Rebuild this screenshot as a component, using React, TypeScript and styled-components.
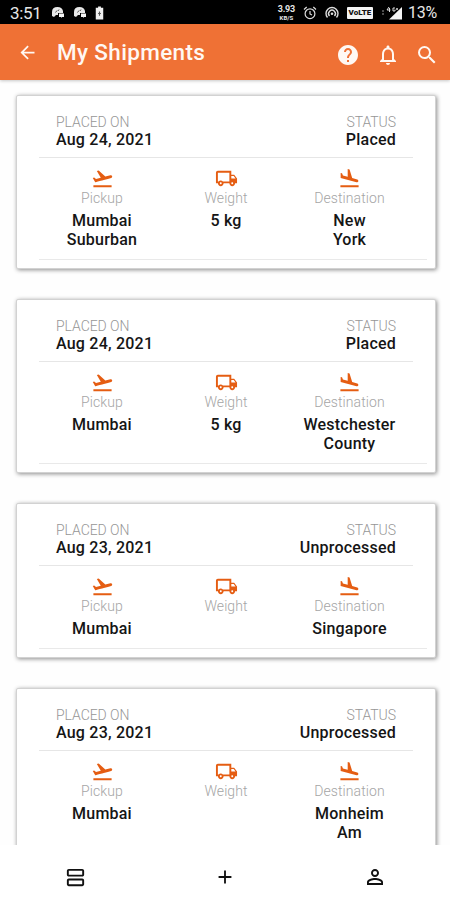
import React from 'react';
import styled, { createGlobalStyle } from 'styled-components';
import {
  MdAdd,
  MdArrowBack,
  MdFlightLand,
  MdFlightTakeoff,
  MdHelp,
  MdNotificationsNone,
  MdOutlineLocalShipping,
  MdOutlineViewAgenda,
  MdPersonOutline,
  MdSearch,
} from 'react-icons/md';

const GlobalStyle = createGlobalStyle`
  * { box-sizing: border-box; }
  body { margin: 0; background: #fefefe; }
`;

const Screen = styled.div`
  width: 450px;
  height: 900px;
  display: flex;
  flex-direction: column;
  overflow: hidden;
  background: #fefefe;
  color: #151515;
  font-family: Roboto, 'Liberation Sans', sans-serif;
`;

const StatusBar = styled.div`
  flex: none;
  height: 24px;
  padding: 1px 13px 0 10px;
  display: flex;
  align-items: center;
  background: #000;
  color: #e6e6e6;
  svg { display: block; flex: none; }
`;

const Clock = styled.span`
  width: 41px;
  font-size: 17px;
  letter-spacing: -0.3px;
`;

const Notices = styled.div`
  flex: 1;
  display: flex;
  align-items: center;
  gap: 8px;
`;

const Signals = styled.div`
  display: flex;
  align-items: center;
  gap: 8px;
`;

const NetSpeed = styled.div`
  width: 17px;
  display: flex;
  flex-direction: column;
  align-items: center;
  font-weight: 700;
  font-size: 9px;
  line-height: 9px;
  letter-spacing: -0.2px;
  small { font-size: 6px; line-height: 7px; letter-spacing: 0; }
`;

const Volte = styled.span`
  width: 26px;
  height: 12px;
  border-radius: 1px;
  background: #f4f4f4;
  color: #111;
  font-size: 8px;
  font-weight: 900;
  line-height: 12.5px;
  text-align: center;
`;

const Battery = styled.span`
  margin-left: -2px;
  font-size: 16px;
  letter-spacing: -0.2px;
`;

const AppBar = styled.header`
  flex: none;
  height: 56px;
  padding: 0 11px 0 17px;
  display: flex;
  align-items: center;
  background: #ef7135;
  color: #fff8f3;
  box-shadow: 0 1px 3px rgba(0, 0, 0, 0.22);
  z-index: 1;
`;

const BackButton = styled.span`
  display: flex;
  margin-right: 19px;
`;

const Title = styled.h1`
  flex: 1;
  margin: 0;
  font-size: 22.5px;
  font-weight: 500;
  line-height: 56px;
  letter-spacing: 0.35px;
`;

const Actions = styled.div`
  display: flex;
  gap: 15.5px;
  padding-top: 6px;
`;

const List = styled.main`
  flex: 1;
  min-height: 0;
  overflow: hidden;
  padding: 15px 14px 0 16px;
  display: flex;
  flex-direction: column;
  gap: 30px;
`;

const Card = styled.article`
  flex: none;
  padding: 16px 8px 8px 22px;
  border: 1px solid #d2d2d2;
  border-radius: 2px;
  background: #fff;
  box-shadow: 1px 1px 4px rgba(0, 0, 0, 0.45);
`;

const Summary = styled.div`
  display: flex;
  justify-content: space-between;
  width: 374px;
  height: 46px;
  padding: 1px 17px 0;
  border-bottom: 1px solid #e6e6e6;
`;

const SummaryItem = styled.div<{ $end?: boolean }>`
  text-align: ${(p) => (p.$end ? 'right' : 'left')};
`;

const Caption = styled.div`
  height: 17px;
  font-size: 14px;
  line-height: 18px;
  letter-spacing: -0.05px;
  color: #969696;
  font-weight: 300;
`;

const Value = styled.div`
  font-size: 16px;
  line-height: 19px;
  font-weight: 500;
  letter-spacing: 0.22px;
`;

const Route = styled.div`
  display: grid;
  grid-template-columns: 124px 124px 123px;
  padding: 9px 0 10px 1px;
  border-bottom: 1px solid #e9e9e9;
`;

const Stop = styled.div`
  display: flex;
  flex-direction: column;
  align-items: center;
  text-align: center;
  svg { display: block; color: #e55d12; }
`;

const StopLabel = styled.div`
  height: 21px;
  font-size: 14px;
  line-height: 17px;
  font-weight: 300;
  letter-spacing: 0.08px;
  color: #a5a5a5;
`;

const BottomNav = styled.nav`
  flex: none;
  height: 55px;
  padding: 9px 0 0 1px;
  display: grid;
  grid-template-columns: repeat(3, 1fr);
  align-items: center;
  justify-items: center;
  background: #fff;
  color: #111;
`;

interface Shipment {
  date: string;
  status: string;
  pickup: string[];
  weight?: string;
  destination: string[];
}

const shipments: Shipment[] = [
  { date: 'Aug 24, 2021', status: 'Placed', pickup: ['Mumbai', 'Suburban'], weight: '5 kg', destination: ['New', 'York'] },
  { date: 'Aug 24, 2021', status: 'Placed', pickup: ['Mumbai'], weight: '5 kg', destination: ['Westchester', 'County'] },
  { date: 'Aug 23, 2021', status: 'Unprocessed', pickup: ['Mumbai'], destination: ['Singapore'] },
  { date: 'Aug 23, 2021', status: 'Unprocessed', pickup: ['Mumbai'], destination: ['Monheim', 'Am', 'Rhein'] },
];

const CloudNotice = () => (
  <svg width="14" height="13" viewBox="0 0 14 13">
    <path d="M1 10V6Q1 1 6.5 1Q11 1 12 5V7H7V9H5L3 11Z" fill="#e8e8e8" />
    <path d="M4.5 6.5L6 4.5M7 5L8 3.5" stroke="#444" strokeWidth="0.9" />
    <path d="M8 7.5H13V11H11L10 12V11H8Z" fill="#f4f4f4" />
  </svg>
);

const BatteryNotice = () => (
  <svg width="9" height="14" viewBox="0 0 9 15">
    <path d="M3 0.5H6V2H8.5V14.5H0.5V2H3Z" fill="#f1f1f1" />
    <path d="M4.5 6V10.5M3 8H6" stroke="#555" strokeWidth="1.2" />
  </svg>
);

const AlarmIcon = () => (
  <svg width="14" height="14" viewBox="0 0 14 14" fill="none" stroke="#ddd" strokeWidth="1.2">
    <circle cx="7" cy="7.7" r="4.9" />
    <path d="M7 5V8L9 9M1 3.5L3.7 1M10.3 1L13 3.5" />
  </svg>
);

const HotspotIcon = () => (
  <svg width="14" height="13" viewBox="0 0 14 13" fill="none" stroke="#ddd" strokeWidth="1.4">
    <path d="M2.5 11.5A6 6 0 1 1 11.5 11.5M4.5 10A3.4 3.4 0 1 1 9.5 10" />
    <circle cx="7" cy="7.8" r="1.3" fill="#ddd" stroke="none" />
  </svg>
);

const NetworkIcon = () => (
  <svg width="21" height="14" viewBox="0 0 21 14">
    <path d="M21 1V13.5H8Z" fill="#f5f5f5" />
    <path d="M1 5H3M1 8H3" stroke="#999" />
    <path d="M8 1L6 4H9.5M8.5 2V6M14 2H12V5H14V3.5M15 3H17M16 2V4" fill="none" stroke="#ddd" strokeWidth="1" />
  </svg>
);

interface StopColumnProps {
  icon: React.ReactNode;
  label: string;
  lines: string[];
}

const StopColumn = ({ icon, label, lines }: StopColumnProps) => (
  <Stop>
    {icon}
    <StopLabel>{label}</StopLabel>
    {lines.map((line) => (
      <Value key={line}>{line}</Value>
    ))}
  </Stop>
);

const ShipmentCard = ({ shipment }: { shipment: Shipment }) => (
  <Card>
    <Summary>
      <SummaryItem>
        <Caption>PLACED ON</Caption>
        <Value>{shipment.date}</Value>
      </SummaryItem>
      <SummaryItem $end>
        <Caption>STATUS</Caption>
        <Value>{shipment.status}</Value>
      </SummaryItem>
    </Summary>
    <Route>
      <StopColumn icon={<MdFlightTakeoff size={23} />} label="Pickup" lines={shipment.pickup} />
      <StopColumn
        icon={<MdOutlineLocalShipping size={23} />}
        label="Weight"
        lines={shipment.weight ? [shipment.weight] : []}
      />
      <StopColumn icon={<MdFlightLand size={23} />} label="Destination" lines={shipment.destination} />
    </Route>
  </Card>
);

export default function App() {
  return (
    <>
      <GlobalStyle />
      <Screen>
        <StatusBar>
          <Clock>3:51</Clock>
          <Notices>
            <CloudNotice />
            <CloudNotice />
            <BatteryNotice />
          </Notices>
          <Signals>
            <NetSpeed>
              3.93
              <small>KB/S</small>
            </NetSpeed>
            <AlarmIcon />
            <HotspotIcon />
            <Volte>VoLTE</Volte>
            <NetworkIcon />
            <Battery>13%</Battery>
          </Signals>
        </StatusBar>
        <AppBar>
          <BackButton>
            <MdArrowBack size={21} />
          </BackButton>
          <Title>My Shipments</Title>
          <Actions>
            <MdHelp size={24} />
            <MdNotificationsNone size={24} />
            <MdSearch size={24} />
          </Actions>
        </AppBar>
        <List>
          {shipments.map((shipment, index) => (
            <ShipmentCard key={index} shipment={shipment} />
          ))}
        </List>
        <BottomNav>
          <MdOutlineViewAgenda size={23} />
          <MdAdd size={22} />
          <MdPersonOutline size={24} />
        </BottomNav>
      </Screen>
    </>
  );
}
